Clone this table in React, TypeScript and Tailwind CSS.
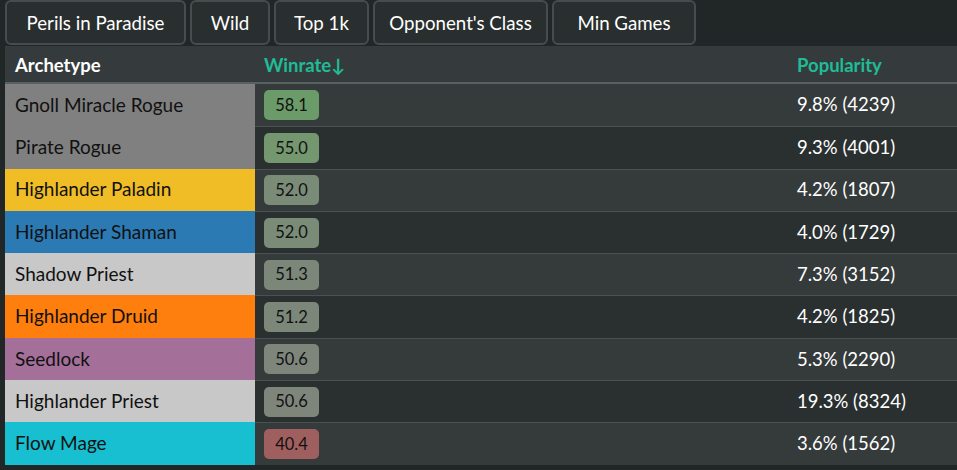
import React from "react";

type Row = { name: string; color: string; wr: string; badge: string; pop: string };

const rows: Row[] = [
  { name: "Gnoll Miracle Rogue", color: "bg-[#808080]", wr: "58.1", badge: "bg-[#6a9b68]", pop: "9.8% (4239)" },
  { name: "Pirate Rogue", color: "bg-[#808080]", wr: "55.0", badge: "bg-[#74976f]", pop: "9.3% (4001)" },
  { name: "Highlander Paladin", color: "bg-[#f0bd27]", wr: "52.0", badge: "bg-[#7a8b77]", pop: "4.2% (1807)" },
  { name: "Highlander Shaman", color: "bg-[#2c7ab4]", wr: "52.0", badge: "bg-[#7a8b77]", pop: "4.0% (1729)" },
  { name: "Shadow Priest", color: "bg-[#c8c8c8]", wr: "51.3", badge: "bg-[#7c877a]", pop: "7.3% (3152)" },
  { name: "Highlander Druid", color: "bg-[#ff7f0e]", wr: "51.2", badge: "bg-[#7c877a]", pop: "4.2% (1825)" },
  { name: "Seedlock", color: "bg-[#a4709a]", wr: "50.6", badge: "bg-[#7e867c]", pop: "5.3% (2290)" },
  { name: "Highlander Priest", color: "bg-[#c8c8c8]", wr: "50.6", badge: "bg-[#7e867c]", pop: "19.3% (8324)" },
  { name: "Flow Mage", color: "bg-[#17bfd0]", wr: "40.4", badge: "bg-[#a05f5f]", pop: "3.6% (1562)" },
];

const tabs = [
  { label: "Perils in Paradise", w: "w-[181px]" },
  { label: "Wild", w: "w-[80px]" },
  { label: "Top 1k", w: "w-[95px]" },
  { label: "Opponent's Class", w: "w-[175px]" },
  { label: "Min Games", w: "w-[144px]" },
];

export default function App() {
  return (
    <div
      className="w-[957px] h-[470px] overflow-hidden bg-[#212626] text-white"
      style={{ fontFamily: "Lato, 'Noto Sans', sans-serif" }}
    >
      <div className="flex gap-[4px] pl-[5px] h-[46px]">
        {tabs.map((t) => (
          <div
            key={t.label}
            className={`${t.w} h-[45px] flex items-center justify-center rounded-[6px] border-2 border-[#474d4e] bg-[#292e2e] text-[18.7px] text-white pt-[1px]`}
          >
            {t.label}
          </div>
        ))}
      </div>
      <div className="ml-[5px] w-[960px]">
        <div className="flex h-[38px] items-center pt-[3px] bg-[#353b3c] border-b-2 border-[#596061] text-[18.5px] font-bold">
          <div className="w-[250px] pl-[10px]">Archetype</div>
          <div className="w-[532px] pl-[9px] text-[#1fbc97]">Winrate↓</div>
          <div className="pl-[10px] text-[#1fbc97]">Popularity</div>
        </div>
        {rows.map((r, i) => (
          <div
            key={r.name + i}
            className={`flex h-[42.3px] ${i % 2 === 0 ? "bg-[#353a3b]" : "bg-[#2a2f2f]"}`}
          >
            <div className={`w-[250px] ${r.color} flex items-center pl-[10px] text-[19px] text-[#111]`}>
              {r.name}
            </div>
            <div className={`flex flex-1 items-center ${i === 0 ? "" : "border-t border-[#4b5152]"}`}>
              <div className="w-[532px] pl-[9px] flex items-center">
                <div
                  className={`${r.badge} w-[55px] h-[30px] rounded-[5px] flex items-center justify-center text-[16.5px] text-[#111]`}
                >
                  {r.wr}
                </div>
              </div>
              <div className="pl-[10px] text-[18.5px] text-white">{r.pop}</div>
            </div>
          </div>
        ))}
      </div>
    </div>
  );
}
